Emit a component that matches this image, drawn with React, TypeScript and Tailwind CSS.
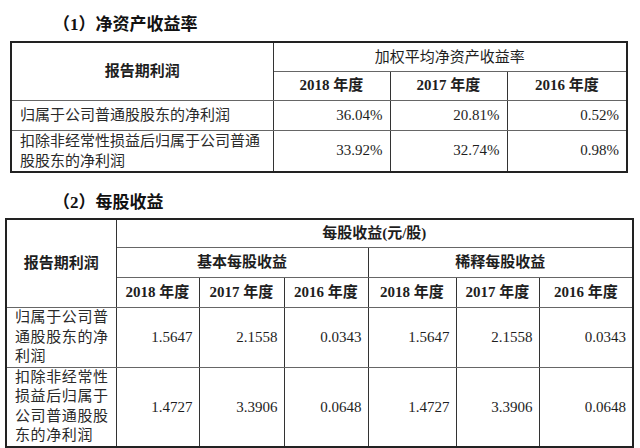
const serif = "font-['Liberation_Serif','Noto_Sans_CJK_SC',serif]";

const roe = [
  { label: ["归属于公司普通股股东的净利润"], values: ["36.04%", "20.81%", "0.52%"] },
  { label: ["扣除非经常性损益后归属于公司普通", "股股东的净利润"], values: ["33.92%", "32.74%", "0.98%"] },
];

const eps = [
  {
    label: ["归属于公司普", "通股股东的净", "利润"],
    values: ["1.5647", "2.1558", "0.0343", "1.5647", "2.1558", "0.0343"],
  },
  {
    label: ["扣除非经常性", "损益后归属于", "公司普通股股", "东的净利润"],
    values: ["1.4727", "3.3906", "0.0648", "1.4727", "3.3906", "0.0648"],
  },
];

const years = ["2018 年度", "2017 年度", "2016 年度"];

const cell = "border border-x-[#333] border-y-[#666] p-0";

function Lines({ lines }: { lines: string[] }) {
  return (
    <>
      {lines.map((l, i) => (
        <span key={i} className="block">
          {l}
        </span>
      ))}
    </>
  );
}

export default function App() {
  return (
    <div className={`w-[640px] h-[448px] bg-white text-[#1e1e1e] overflow-hidden ${serif}`}>
      <div className="h-[41px] pt-[14px] pl-[53px] text-[17px] leading-[22px] font-semibold text-[#111]">
        （1）净资产收益率
      </div>

      <table className="ml-[10px] w-[616px] table-fixed border-collapse border-2 border-[#222] text-[15px]">
        <colgroup>
          <col className="w-[262px]" />
          <col className="w-[117px]" />
          <col className="w-[117px]" />
          <col className="w-[120px]" />
        </colgroup>
        <tbody>
          <tr className="h-[29px]">
            <td rowSpan={2} className={`${cell} text-center font-bold`}>
              报告期利润
            </td>
            <td colSpan={3} className={`${cell} text-center`}>
              加权平均净资产收益率
            </td>
          </tr>
          <tr className="h-[29px]">
            {years.map((y) => (
              <td key={y} className={`${cell} text-center font-bold`}>
                {y}
              </td>
            ))}
          </tr>
          {roe.map((r, i) => (
            <tr key={i} className={i === 0 ? "h-[30px]" : "h-[40px]"}>
              <td className={`${cell} pl-[8px] leading-[20px] text-[#2a2a2a]`}>
                <Lines lines={r.label} />
              </td>
              {r.values.map((v, j) => (
                <td key={j} className={`${cell} text-right pr-[7px]`}>
                  {v}
                </td>
              ))}
            </tr>
          ))}
        </tbody>
      </table>

      <div className="h-[45px] pt-[19px] pl-[53px] text-[17px] leading-[22px] font-semibold text-[#111]">
        （2）每股收益
      </div>

      <table className="ml-[5px] w-[627px] table-fixed border-collapse border-2 border-[#222] text-[15px]">
        <colgroup>
          <col className="w-[110px]" />
          <col className="w-[83px]" />
          <col className="w-[85px]" />
          <col className="w-[84px]" />
          <col className="w-[88px]" />
          <col className="w-[83px]" />
          <col className="w-[94px]" />
        </colgroup>
        <tbody>
          <tr className="h-[29px]">
            <td rowSpan={3} className={`${cell} text-center font-bold`}>
              报告期利润
            </td>
            <td colSpan={6} className={`${cell} text-center font-semibold`}>
              每股收益(元/股)
            </td>
          </tr>
          <tr className="h-[30px]">
            <td colSpan={3} className={`${cell} text-center font-semibold`}>
              基本每股收益
            </td>
            <td colSpan={3} className={`${cell} text-center font-semibold`}>
              稀释每股收益
            </td>
          </tr>
          <tr className="h-[30px]">
            {[...years, ...years].map((y, i) => (
              <td key={i} className={`${cell} text-center font-bold`}>
                {y}
              </td>
            ))}
          </tr>
          {eps.map((r, i) => (
            <tr key={i} className={i === 0 ? "h-[59px]" : "h-[80px]"}>
              <td className={`${cell} pl-[8px] leading-[19.5px] tracking-[0.6px] text-[#2a2a2a]`}>
                <Lines lines={r.label} />
              </td>
              {r.values.map((v, j) => (
                <td key={j} className={`${cell} text-right pr-[6px]`}>
                  {v}
                </td>
              ))}
            </tr>
          ))}
        </tbody>
      </table>
    </div>
  );
}
